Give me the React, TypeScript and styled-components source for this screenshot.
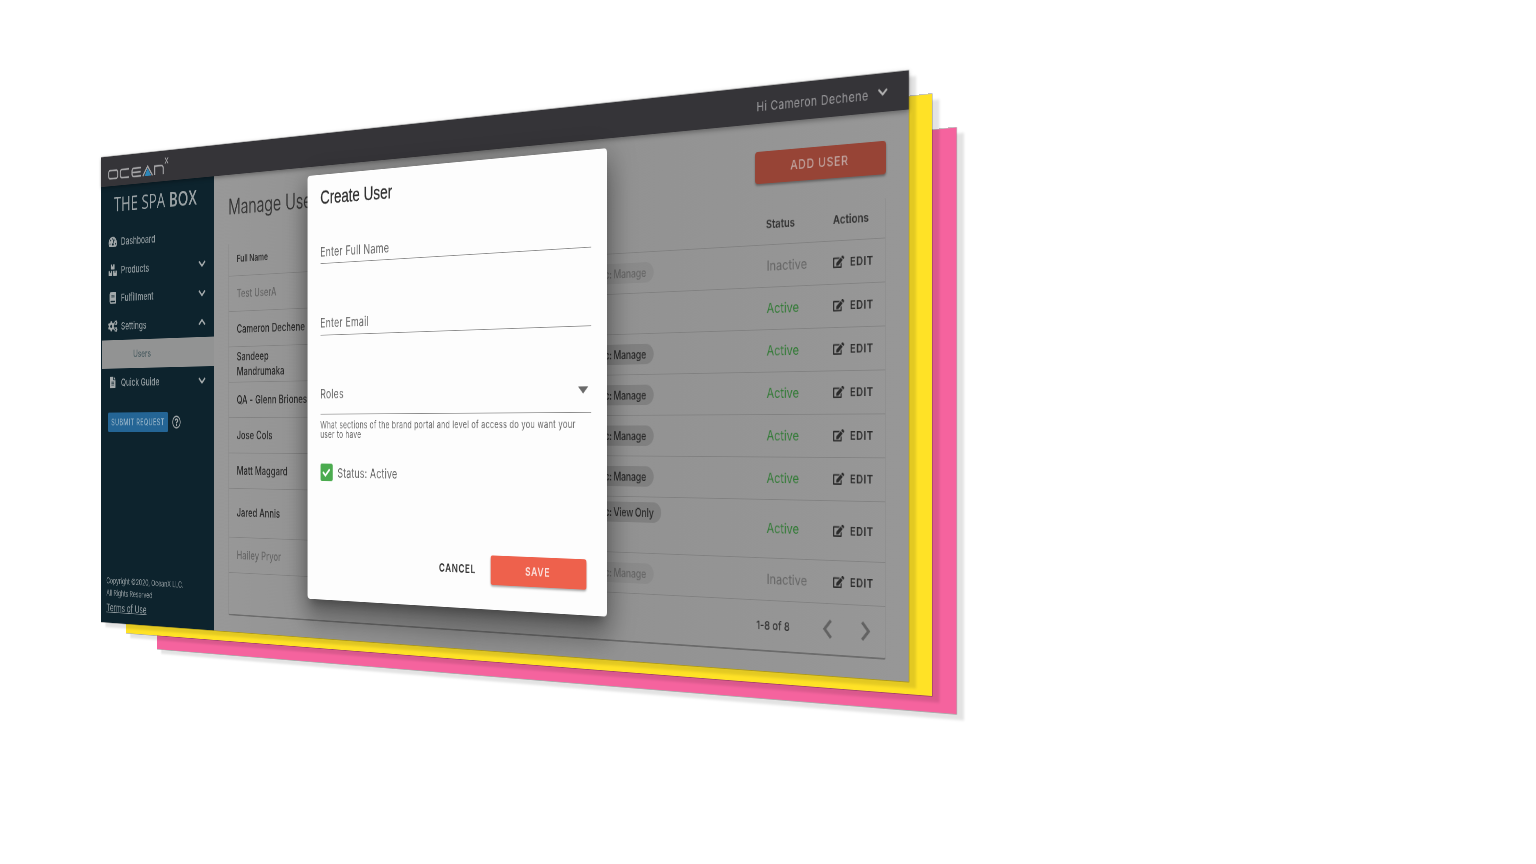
import React from "react";
import styled, { createGlobalStyle, css } from "styled-components";
import {
  FaTachometerAlt, FaBoxes, FaBook, FaCogs, FaFileAlt, FaRegQuestionCircle, FaEdit, FaCheck, FaChevronDown, FaChevronUp,
} from "react-icons/fa";

const W = 1440;
const H = 690;

type Quad = { left: number; leftTop: number; leftBottom: number; right: number; rightTop: number; rightBottom: number };

/** Projects a W x H sheet onto a trapezoid whose left and right sides are vertical. */
const project = (q: Quad) => {
  const k = (q.leftBottom - q.leftTop) / (q.rightBottom - q.rightTop);
  const a = (q.right * k - q.left) / W;
  const d = (q.rightTop * k - q.leftTop) / W;
  const g = (k - 1) / W;
  const e = (q.leftBottom - q.leftTop) / H;
  return `matrix3d(${a},${d},0,${g.toFixed(9)},0,${e},0,0,0,0,1,0,${q.left},${q.leftTop},0,1)`;
};

const Global = createGlobalStyle`
  *, *::before, *::after { box-sizing: border-box; }
  body { margin: 0; background: #fff; font-family: Inter, "Liberation Sans", sans-serif; }
`;

const Stage = styled.main`
  display: grid;
  width: 1536px;
  height: 864px;
  overflow: hidden;
  background: #fff;
`;

const Sheet = styled.div<{ $quad: Quad; $color: string }>`
  grid-area: 1 / 1;
  width: ${W}px;
  height: ${H}px;
  transform-origin: 0 0;
  transform: ${(p) => project(p.$quad)};
  background: ${(p) => p.$color};
  box-shadow: 0 0 0 0.6px rgba(0, 0, 0, 0.4), 10px 7px 3px rgba(0, 0, 0, 0.11);
`;

const Screen = styled(Sheet)`
  display: flex;
  flex-direction: column;
  position: relative;
`;

const TopBar = styled.header`
  height: 44px;
  flex: none;
  display: flex;
  align-items: center;
  justify-content: space-between;
  padding: 4px 28px 0 16px;
  background: #353438;
  color: #99989b;
  box-shadow: 0 2px 6px rgba(0, 0, 0, 0.35);
  z-index: 1;
`;

const Greeting = styled.div`
  display: flex;
  align-items: center;
  margin-top: -2px;
  font-size: 15px;
  letter-spacing: 0.55px;
  svg { margin: -3px 0 0 12px; color: #b4b4b4; font-size: 15px; }
`;

const Body = styled.div`
  flex: 1;
  display: flex;
  min-height: 0;
`;

const Sidebar = styled.nav`
  width: 254px;
  display: flex;
  flex-direction: column;
  background: #0d232d;
  color: #909a9e;
`;

const Brand = styled.div`
  height: 62px;
  padding: 7px 0 0 30px;
  font: 400 29.5px/40px "Open Sans", sans-serif;
  letter-spacing: 0.3px;
  white-space: nowrap;
  color: #9aa2a5;
  b { font-weight: 600; }
`;

const NavItem = styled.div`
  height: 41.5px;
  display: flex;
  align-items: center;
  padding: 0 17px 0 16px;
  font-size: 15.2px;
  font-weight: 500;
  span { flex: 1; margin-left: 8px; letter-spacing: -0.1px; }
  > svg:first-child { width: 22px; height: 17px; color: #a3a9ab; }
  > svg:last-child { width: 19px; height: 17px; margin-top: -1px; color: #a3a9ab; }
`;

const SubItem = styled.div`
  height: 42px;
  margin-left: 2px;
  padding-left: 72px;
  font-size: 14.5px;
  font-weight: 500;
  line-height: 42px;
  color: #4d5e63;
  background: #929393;
`;

const Support = styled.div`
  display: flex;
  align-items: center;
  gap: 9px;
  margin: 23px 0 0 16px;
  svg { font-size: 19px; color: #a3a9ab; }
`;

const RequestButton = styled.div`
  width: 137px;
  height: 29px;
  border-radius: 3px;
  background: #246595;
  color: #93b2c7;
  font-size: 12.5px;
  font-weight: 500;
  line-height: 29px;
  letter-spacing: 0.85px;
  text-align: center;
  white-space: nowrap;
`;

const Legal = styled.div`
  margin-top: auto;
  padding: 0 0 9px 12px;
  font-size: 12px;
  line-height: 17.5px;
  letter-spacing: -0.2px;
  u { display: block; font-size: 15px; line-height: 27px; }
`;

const Content = styled.section`
  flex: 1;
  padding: 22px 31px 25px 30px;
  display: flex;
  flex-direction: column;
  background: linear-gradient(90deg, #989898, #8e8e8e 40%, #939393 70%, #979797);
`;

const Heading = styled.div`
  flex: none;
  display: flex;
  justify-content: space-between;
  height: 75px;
  h1 { margin: 8px 0 0; font-size: 29.3px; font-weight: 300; line-height: 32px; color: #333; -webkit-text-stroke: 0.3px #333; }
`;

const AddButton = styled.div`
  width: 187px;
  height: 38px;
  margin-top: 11px;
  border-radius: 4px;
  background: #974436;
  color: #bfa39e;
  font-size: 15px;
  font-weight: 500;
  line-height: 37px;
  letter-spacing: 0.95px;
  text-align: center;
  box-shadow: 0 2px 3px rgba(0, 0, 0, 0.35);
`;

const Table = styled.div`
  flex: 1;
  border: 1px solid rgba(0, 0, 0, 0.05);
  border-top-color: transparent;
  border-bottom: 2px solid rgba(0, 0, 0, 0.28);
  border-radius: 3px;
`;

const columns = css`
  display: grid;
  grid-template-columns: 519px 417px 97px 1fr;
  padding-left: 17px;
  align-items: center;
  border-bottom: 1px solid rgba(0, 0, 0, 0.13);
`;

const HeadRow = styled.div`
  ${columns}
  height: 46px;
  padding-bottom: 3px;
  font-size: 13.7px;
  font-weight: 600;
  color: #303030;
`;

const Row = styled.div<{ $tall?: boolean; $muted?: boolean }>`
  ${columns}
  height: ${(p) => (p.$tall ? 69 : 50)}px;
  color: ${(p) => (p.$muted ? "#666" : "#262626")};
`;

const Name = styled.div<{ $narrow?: boolean }>`
  width: ${(p) => (p.$narrow ? 115 : 240)}px;
  margin-top: -1px;
  font-size: 15.6px;
  font-weight: 500;
  line-height: 21px;
  letter-spacing: 0.15px;
`;

const Chips = styled.div`
  display: flex;
  flex-direction: column;
  align-items: flex-start;
  gap: 7px;
  margin-left: 125px;
`;

const Chip = styled.div<{ $muted?: boolean; $w: number }>`
  width: ${(p) => p.$w}px;
  height: 25px;
  padding-right: 12px;
  border-radius: 13px;
  background: ${(p) => (p.$muted ? "rgba(0,0,0,.05)" : "rgba(0,0,0,.13)")};
  font-size: 14px;
  font-weight: 500;
  line-height: 25px;
  letter-spacing: -0.2px;
  word-spacing: -1px;
  text-align: right;
`;

const State = styled.div<{ $active: boolean }>`
  margin: -2px 0 0 1px;
  font-size: 16px;
  color: ${(p) => (p.$active ? "#2f7a33" : "#666")};
`;

const Edit = styled.div`
  display: flex;
  align-items: center;
  gap: 8px;
  margin-top: -1px;
  font-size: 13.2px;
  font-weight: 600;
  letter-spacing: 0.8px;
  color: #2b2b2b;
  svg { font-size: 16px; }
`;

const Pager = styled.div`
  height: 58px;
  display: flex;
  align-items: center;
  justify-content: flex-end;
  padding-right: 20px;
  font-size: 13.5px;
  font-weight: 500;
  color: #303030;
  svg { color: #626262; }
  svg:first-of-type { margin: 0 40px 0 47px; }
`;

const Overlay = styled.div`
  position: absolute;
  inset: 0;
  z-index: 2;
  display: flex;
  align-items: center;
  justify-content: center;
`;

const Dialog = styled.div`
  width: 543px;
  height: 581px;
  margin: 3px 2px 0 0;
  padding: 16px 26px 32px;
  display: flex;
  flex-direction: column;
  border-radius: 5px;
  background: #fdfdfd;
  color: #666;
  box-shadow: 0 11px 15px -7px rgba(0, 0, 0, 0.3), 0 24px 38px 3px rgba(0, 0, 0, 0.24), 0 9px 46px 8px rgba(0, 0, 0, 0.2);
  h2 { margin: 0 0 43px; font: 400 25.9px/30px "Liberation Sans", sans-serif; color: #2e2e2e; -webkit-text-stroke: 0.3px #2e2e2e; }
`;

const Field = styled.div<{ $h: number; $gap: number }>`
  display: flex;
  align-items: center;
  justify-content: space-between;
  height: ${(p) => p.$h}px;
  margin-bottom: ${(p) => p.$gap}px;
  padding-right: 5px;
  border-bottom: 1px solid #8b8b8b;
  font-size: 17.2px;
  letter-spacing: 0.4px;
`;

const Hint = styled.p`
  margin: 0;
  padding-right: 20px;
  font-size: 13px;
  line-height: 13px;
  letter-spacing: 0.4px;
`;

const Check = styled.div`
  display: flex;
  align-items: center;
  gap: 10px;
  margin-top: 33px;
  font-size: 17.2px;
  letter-spacing: 0.25px;
`;

const Tick = styled.span`
  display: grid;
  place-items: center;
  width: 24px;
  height: 24px;
  border-radius: 3px;
  background: #4bab4f;
  color: #fff;
  font-size: 15px;
`;

const DialogActions = styled.div`
  display: flex;
  align-items: center;
  justify-content: flex-end;
  gap: 26px;
  margin-top: auto;
  padding-right: 8px;
  color: #333;
  font-size: 14.8px;
  font-weight: 600;
  letter-spacing: 0.95px;
`;

const SaveButton = styled.div`
  width: 164px;
  height: 38px;
  border-radius: 4px;
  background: #ee614c;
  color: #fbe3df;
  line-height: 38px;
  text-align: center;
  box-shadow: 0 2px 3px rgba(0, 0, 0, 0.35);
`;

const Mark = styled.svg`
  margin-top: -6px;
`;

const Logo = () => (
  <Mark width="144" height="34" viewBox="0 0 144 34" fill="none" stroke="#a5a4a6" strokeWidth="2.5">
    <rect x="1.5" y="17" width="21" height="12" rx="3.5" />
    <path d="M49 17H32a3.500 3.500 0 0 0-3.500 3.500v5a3.500 3.500 0 0 0 3.500 3.500h17M76 17H59a3.500 3.500 0 0 0-3.500 3.500v5a3.500 3.500 0 0 0 3.500 3.500h17M56 23h19M107 30V17h15a4 4 0 0 1 4 4v9" />
    <path d="M80 30l11-14 11 14" />
    <path d="M84 30l7-11 8 11z" fill="#2d86b8" stroke="none" />
    <path d="M130 6l7 9M137 6l-7 9" strokeWidth="1.500" />
  </Mark>
);

const Arrow = ({ d }: { d: string }) => (
  <svg width="14" height="22" viewBox="0 0 14 22" fill="none" stroke="currentColor" strokeWidth="3.600">
    <path d={d} />
  </svg>
);

const users = [
  { name: "Test UserA", active: false, chips: [["Public: Manage", 120]] },
  { name: "Cameron Dechene", active: true, chips: [] },
  { name: "Sandeep Mandrumaka", active: true, narrow: true, chips: [["Public: Manage", 120]] },
  { name: "QA - Glenn Briones", active: true, chips: [["Public: Manage", 120]] },
  { name: "Jose Cols", active: true, chips: [["Public: Manage", 120]] },
  { name: "Matt Maggard", active: true, chips: [["Public: Manage", 120]] },
  { name: "Jared Annis", active: true, tall: true, chips: [["Public: View Only", 132], ["", 40]] },
  { name: "Hailey Pryor", active: false, chips: [["Public: Manage", 120]] },
] as { name: string; active: boolean; narrow?: boolean; tall?: boolean; chips: [string, number][] }[];

export default function App() {
  return (
    <Stage>
      <Global />
      <Sheet $color="#f5639e" $quad={{ left: 157, leftTop: 212, leftBottom: 649, right: 956.5, rightTop: 127.5, rightBottom: 714 }} />
      <Sheet $color="#ffe226" $quad={{ left: 126, leftTop: 181, leftBottom: 633, right: 932, rightTop: 94, rightBottom: 696 }} />
      <Screen $color="#939393" $quad={{ left: 101.2, leftTop: 157.5, leftBottom: 622, right: 908.7, rightTop: 70.5, rightBottom: 681.7 }}>
        <TopBar>
          <Logo />
          <Greeting>Hi Cameron Dechene<FaChevronDown /></Greeting>
        </TopBar>
        <Body>
          <Sidebar>
            <Brand>THE SPA <b>BOX</b></Brand>
            <NavItem><FaTachometerAlt /><span>Dashboard</span></NavItem>
            <NavItem><FaBoxes /><span>Products</span><FaChevronDown /></NavItem>
            <NavItem><FaBook /><span>Fulfillment</span><FaChevronDown /></NavItem>
            <NavItem><FaCogs /><span>Settings</span><FaChevronUp /></NavItem>
            <SubItem>Users</SubItem>
            <NavItem><FaFileAlt /><span>Quick Guide</span><FaChevronDown /></NavItem>
            <Support><RequestButton>SUBMIT REQUEST</RequestButton><FaRegQuestionCircle /></Support>
            <Legal>Copyright ©2020, OceanX LLC.<br />All Rights Reserved<u>Terms of Use</u></Legal>
          </Sidebar>
          <Content>
            <Heading><h1>Manage Users</h1><AddButton>ADD USER</AddButton></Heading>
            <Table>
              <HeadRow><div>Full Name</div><div>Roles</div><div>Status</div><div>Actions</div></HeadRow>
              {users.map((u) => (
                <Row key={u.name} $tall={u.tall} $muted={!u.active}>
                  <Name $narrow={u.narrow}>{u.name}</Name>
                  <Chips>
                    {u.chips.map(([label, w], i) => <Chip key={i} $w={w} $muted={!u.active}>{label}</Chip>)}
                  </Chips>
                  <State $active={u.active}>{u.active ? "Active" : "Inactive"}</State>
                  <Edit><FaEdit />EDIT</Edit>
                </Row>
              ))}
              <Pager>1-8 of 8<Arrow d="M12 1L3 11l9 10" /><Arrow d="M2 1l9 10-9 10" /></Pager>
            </Table>
          </Content>
        </Body>
        <Overlay>
          <Dialog>
            <h2>Create User</h2>
            <Field $h={33} $gap={64}>Enter Full Name</Field>
            <Field $h={34} $gap={52}>Enter Email</Field>
            <Field $h={56} $gap={8}>
              Roles
              <svg width="17" height="9" viewBox="0 0 17 9"><path d="M0 0h17l-8.500 9z" fill="#6a6a6a" /></svg>
            </Field>
            <Hint>What sections of the brand portal and level of access do you want your user to have</Hint>
            <Check><Tick><FaCheck /></Tick>Status: Active</Check>
            <DialogActions>CANCEL<SaveButton>SAVE</SaveButton></DialogActions>
          </Dialog>
        </Overlay>
      </Screen>
    </Stage>
  );
}
